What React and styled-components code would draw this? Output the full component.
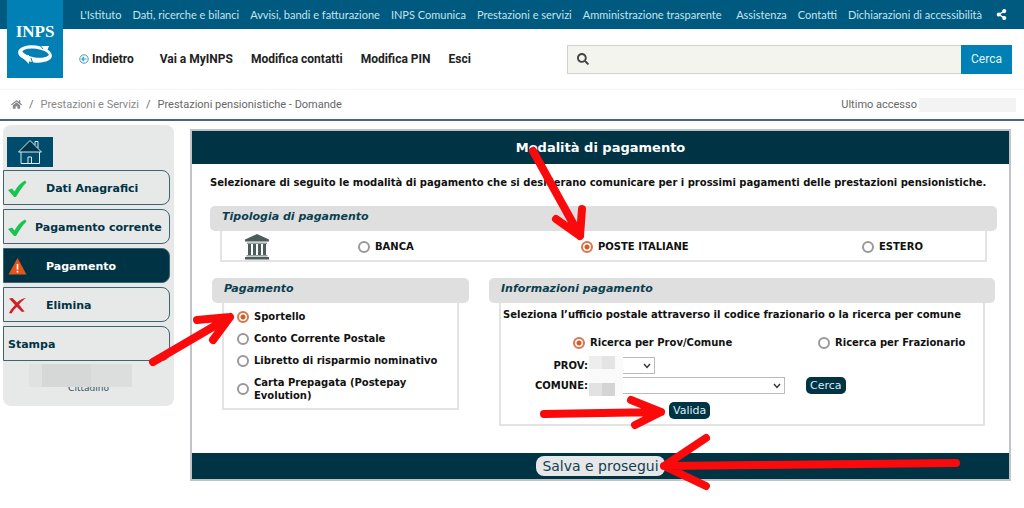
import React, {useState} from 'react'
import styled, {createGlobalStyle, css} from 'styled-components'
import {FaHome, FaSearch, FaShareAlt} from 'react-icons/fa'

const navy = '#003344'
const teal = '#00597f'
const blue = '#0080b4'
const grey = '#dfdfdf'
const red = '#fb0a0c'

const institutionalLinks = [
  "L'Istituto",
  'Dati, ricerche e bilanci',
  'Avvisi, bandi e fatturazione',
  'INPS Comunica',
  'Prestazioni e servizi',
  'Amministrazione trasparente'
]
const serviceLinks = ['Assistenza', 'Contatti', 'Dichiarazioni di accessibilità']
const actions = ['Vai a MyINPS', 'Modifica contatti', 'Modifica PIN', 'Esci']

const steps = [
  {label: 'Dati Anagrafici', icon: 'check'},
  {label: 'Pagamento corrente', icon: 'check', tight: true},
  {label: 'Pagamento', icon: 'warning', active: true},
  {label: 'Elimina', icon: 'cross'},
  {label: 'Stampa'}
]

const paymentTypes = ['BANCA', 'POSTE ITALIANE', 'ESTERO']
const paymentModes = [
  'Sportello',
  'Conto Corrente Postale',
  'Libretto di risparmio nominativo',
  'Carta Prepagata (Postepay Evolution)'
]
const searchModes = ['Ricerca per Prov/Comune', 'Ricerca per Frazionario']

export default function App() {
  return (
    <>
      <GlobalStyle />
      <Header />
      <Breadcrumb />
      <Content>
        <Sidebar />
        <PaymentPanel />
      </Content>
    </>
  )
}

function Header() {
  return (
    <header>
      <TopBar>
        <Logo href="#" aria-label="INPS">
          <LogoMark />
        </Logo>
        <TopLinks>
          {institutionalLinks.map(link => (
            <TopLink key={link} href="#">
              {link}
            </TopLink>
          ))}
        </TopLinks>
        <TopLinks>
          {serviceLinks.map(link => (
            <TopLink key={link} href="#">
              {link}
            </TopLink>
          ))}
          <ShareLink href="#" aria-label="Condividi">
            <FaShareAlt size={11} />
          </ShareLink>
        </TopLinks>
      </TopBar>
      <NavBar>
        <Actions>
          <BackLink href="#">
            <BackIcon />
            Indietro
          </BackLink>
          {actions.map(action => (
            <ActionLink key={action} href="#">
              {action}
            </ActionLink>
          ))}
        </Actions>
        <SearchForm onSubmit={e => e.preventDefault()}>
          <SearchField>
            <FaSearch size={12} />
            <SearchInput type="search" aria-label="Cerca nel sito" />
          </SearchField>
          <SearchButton>Cerca</SearchButton>
        </SearchForm>
      </NavBar>
    </header>
  )
}

function Breadcrumb() {
  return (
    <CrumbBar>
      <Crumbs aria-label="Percorso">
        <CrumbLink href="#" aria-label="Home">
          <FaHome size={11} />
        </CrumbLink>
        <span>/</span>
        <CrumbLink href="#">Prestazioni e Servizi</CrumbLink>
        <span>/</span>
        <span>Prestazioni pensionistiche - Domande</span>
      </Crumbs>
      <LastAccess>
        Ultimo accesso
        <HiddenDate />
      </LastAccess>
    </CrumbBar>
  )
}

function Sidebar() {
  return (
    <Side>
      <HomeLink href="#" aria-label="Home">
        <HouseIcon />
      </HomeLink>
      <Steps>
        {steps.map(({label, icon, active, tight}) => (
          <li key={label}>
            <Step href="#" $active={active}>
              {icon && (
                <StepIcon $tight={tight}>
                  <StatusIcon name={icon} />
                </StepIcon>
              )}
              {label}
            </Step>
          </li>
        ))}
      </Steps>
      <User>
        Cittadino
        <UserCover />
      </User>
    </Side>
  )
}

function PaymentPanel() {
  const [type, setType] = useState('POSTE ITALIANE')
  const [mode, setMode] = useState('Sportello')
  const [search, setSearch] = useState('Ricerca per Prov/Comune')

  return (
    <Panel onSubmit={e => e.preventDefault()}>
      <PanelTitle>Modalità di pagamento</PanelTitle>
      <Intro>
        Selezionare di seguito le modalità di pagamento che si desiderano
        comunicare per i prossimi pagamenti delle prestazioni pensionistiche.
      </Intro>

      <TypeSection>
        <SectionTitle>Tipologia di pagamento</SectionTitle>
        <TypeBox role="radiogroup" aria-label="Tipologia di pagamento">
          <BankIcon />
          {paymentTypes.map(item => (
            <Option key={item}>
              <Radio
                name="type"
                checked={type === item}
                onChange={() => setType(item)}
              />
              {item}
              {item === 'POSTE ITALIANE' && <DownArrow />}
            </Option>
          ))}
        </TypeBox>
      </TypeSection>

      <Columns>
        <section>
          <SectionTitle>Pagamento</SectionTitle>
          <ModeBox role="radiogroup" aria-label="Pagamento">
            {paymentModes.map(item => (
              <Option key={item}>
                <Radio
                  name="mode"
                  checked={mode === item}
                  onChange={() => setMode(item)}
                />
                <span>{item}</span>
                {item === 'Sportello' && <UpArrow />}
              </Option>
            ))}
          </ModeBox>
        </section>

        <section>
          <SectionTitle>Informazioni pagamento</SectionTitle>
          <InfoBox>
            <Hint>
              Seleziona l’ufficio postale attraverso il codice frazionario o la
              ricerca per comune
            </Hint>
            <SearchModes role="radiogroup" aria-label="Tipo di ricerca">
              {searchModes.map(item => (
                <Option key={item}>
                  <Radio
                    name="search"
                    checked={search === item}
                    onChange={() => setSearch(item)}
                  />
                  {item}
                </Option>
              ))}
            </SearchModes>
            <Fields>
              <FieldLabel htmlFor="prov">PROV:</FieldLabel>
              <FieldRow>
                <SelectWrap $width="66px">
                  <Select id="prov" />
                  <Chevron />
                  <FieldCover />
                </SelectWrap>
              </FieldRow>
              <FieldLabel htmlFor="comune">COMUNE:</FieldLabel>
              <FieldRow>
                <SelectWrap $width="196px">
                  <Select id="comune" />
                  <Chevron />
                  <FieldCover $low />
                </SelectWrap>
                <SmallButton type="button">Cerca</SmallButton>
              </FieldRow>
            </Fields>
            <ValidateRow>
              <SmallButton type="button">
                Valida
                <RightArrow />
              </SmallButton>
            </ValidateRow>
          </InfoBox>
        </section>
      </Columns>

      <PanelFooter>
        <SaveButton>
          Salva e prosegui
          <LeftArrow />
        </SaveButton>
      </PanelFooter>
    </Panel>
  )
}

/* Icons */

function LogoMark() {
  return (
    <svg width="40" height="52" viewBox="0 0 40 52" fill="#fff">
      <text
        x="20"
        y="24"
        textAnchor="middle"
        fontFamily="'Liberation Serif', serif"
        fontWeight="700"
        fontSize="17"
      >
        INPS
      </text>
      <g transform="rotate(8 20 41)">
        <path
          fillRule="evenodd"
          d="M3 41A17 8.500 0 0 1 37 41A17 8.500 0 0 1 3 41ZM7 40A14 6 0 0 0 34 40A14 6 0 0 0 7 40Z"
        />
      </g>
      <path d="M25 33L34 33L32 38Z" />
      <path d="M7 44L14 42L14 51Z" />
      <path d="M24 31L28 36M16 45L18 51" stroke={blue} strokeWidth="1" />
    </svg>
  )
}

function BackIcon() {
  return (
    <svg width="10" height="10" viewBox="0 0 10 10" fill="none" stroke="#3a9cc2">
      <circle cx="5" cy="5" r="4.2" />
      <path d="M7.500 5H3M5 3L3 5L5 7" strokeWidth="1.2" />
    </svg>
  )
}

function HouseIcon() {
  return (
    <svg width="26" height="26" viewBox="0 0 26 26" fill="none" stroke="#d9ecf2">
      <path d="M18 6V2.500H21V9" />
      <path d="M4 13V24.500H22.500V13" />
      <path d="M13 1.500L1.500 13H24.500Z" fill="#00374d" />
      <path d="M11 24.500V18H14.500V24.500" />
    </svg>
  )
}

function StatusIcon({name}) {
  if (name === 'check') {
    return (
      <svg width="19" height="18" viewBox="0 0 19 18">
        <path
          d="M0 10L4 8.500L6.500 11.500C9 7 12 3 17 0.500L18.500 2.500C14 6.500 11 12 8 17H6Z"
          fill="#18c552"
        />
      </svg>
    )
  }
  if (name === 'warning') {
    return (
      <svg width="19" height="17" viewBox="0 0 19 17">
        <path d="M9.500 0L18.500 16.500H0.500Z" fill="#e2561c" />
        <path d="M9.500 6V11.500M9.500 12.800V14.500" stroke="#fff" strokeWidth="1.600" />
      </svg>
    )
  }
  return (
    <svg width="19" height="17" viewBox="0 0 19 17">
      <path
        d="M1 1.500L4.500 1L9 5.500C12 3 14 1.500 18 1C14.500 3.500 12.500 5.500 11 7.500L16.500 14.500L14 15L9 10C6.500 12 5 14 3.500 16.500L1 16C2.500 13 4.500 10.500 7 8Z"
        fill="#cf2029"
      />
    </svg>
  )
}

function BankIcon() {
  return (
    <BankSvg width="24" height="26" viewBox="0 0 24 26" fill="#4c5c5b">
      <path d="M12 0L24 5.500V7.500H0V5.500Z" />
      <path d="M2 8.500H22V10H2Z" opacity="0.600" />
      <path d="M3 10H6V21H3ZM8 10H11V21H8ZM13 10H16V21H13ZM18 10H21V21H18Z" />
      <path d="M1.500 21H22.500V22.500H1.500Z" opacity="0.600" />
      <path d="M0 23H24V25.500H0Z" />
    </BankSvg>
  )
}

function Chevron() {
  return (
    <ChevronSvg width="8" height="6" viewBox="0 0 8 6" fill="none" stroke="#333" strokeWidth="1.400">
      <path d="M1 1L4 4.500L7 1" />
    </ChevronSvg>
  )
}

/* Hand drawn arrows, each pinned to the control it points at */

function DownArrow() {
  return (
    <DownArrowSvg width="64" height="100" viewBox="0 0 64 100">
      <path d="M6 6L53 91M29 74L53 91L55 64" />
    </DownArrowSvg>
  )
}

function UpArrow() {
  return (
    <UpArrowSvg width="90" height="62" viewBox="0 0 90 62">
      <path d="M6 54L83 9M50 12L83 9L66 32" />
    </UpArrowSvg>
  )
}

function RightArrow() {
  return (
    <RightArrowSvg width="130" height="38" viewBox="0 0 130 38">
      <path d="M5 20L122 18M92 6L122 18L96 31" />
    </RightArrowSvg>
  )
}

function LeftArrow() {
  return (
    <LeftArrowSvg width="304" height="62" viewBox="0 0 304 62">
      <path d="M298 31L100 33L6 34M48 6L6 34L48 54" />
    </LeftArrowSvg>
  )
}

/* Styles */

const GlobalStyle = createGlobalStyle`
  * {
    box-sizing: border-box;
  }
  body {
    margin: 0;
    background: #fff;
    font-family: 'DejaVu Sans', Verdana, sans-serif;
    font-size: 10px;
  }
  a {
    text-decoration: none;
    color: inherit;
  }
  button,
  input,
  select {
    font: inherit;
    margin: 0;
  }
`

const siteFont = css`
  font-family: Roboto, 'Open Sans', sans-serif;
`

const TopBar = styled.div`
  position: relative;
  display: flex;
  justify-content: space-between;
  align-items: center;
  height: 29px;
  padding: 0 17px 0 80px;
  background: ${teal};
  color: #c4e4ee;
  font-family: Lato, sans-serif;
  font-size: 11px;
`

const Logo = styled.a`
  position: absolute;
  top: 0;
  left: 7px;
  display: flex;
  justify-content: center;
  width: 56px;
  height: 78px;
  padding-top: 13px;
  background: ${blue};
`

const TopLinks = styled.nav`
  display: flex;
  align-items: center;
  gap: 11px;
`

const TopLink = styled.a`
  white-space: nowrap;
`

const ShareLink = styled.a`
  display: flex;
  margin-left: 3px;
  color: #fff;
`

const NavBar = styled.div`
  ${siteFont}
  display: flex;
  justify-content: space-between;
  align-items: center;
  height: 61px;
  padding: 0 12px 0 79px;
  border-bottom: 1px solid #f4f4f4;
`

const Actions = styled.nav`
  display: flex;
  gap: 18px;
  color: #222;
  font-size: 12px;
  font-weight: 700;
  white-space: nowrap;
`

const ActionLink = styled.a``

const BackLink = styled.a`
  display: flex;
  align-items: center;
  gap: 3px;
  margin-right: 8px;
`

const SearchForm = styled.form`
  display: flex;
  flex: 0 0 445px;
  height: 29px;
`

const SearchField = styled.div`
  display: flex;
  flex: 1;
  align-items: center;
  gap: 8px;
  padding-left: 9px;
  border: 1px solid #d2d2cf;
  border-right: 0;
  background: #f4f4ef;
  color: #444;
`

const SearchInput = styled.input`
  flex: 1;
  min-width: 0;
  border: 0;
  outline: 0;
  background: none;
`

const SearchButton = styled.button`
  width: 51px;
  padding: 0;
  border: 0;
  background: ${blue};
  color: #e2f3f9;
  font-size: 12px;
`

const CrumbBar = styled.div`
  ${siteFont}
  display: flex;
  justify-content: space-between;
  align-items: center;
  height: 31px;
  padding: 0 8px 0 11px;
  border-bottom: 2px solid #456582;
  color: #666;
  font-size: 11px;
`

const Crumbs = styled.nav`
  display: flex;
  align-items: center;
  gap: 7px;
`

const CrumbLink = styled.a`
  display: flex;
  color: #888;
`

const LastAccess = styled.div`
  display: flex;
  align-items: center;
  gap: 2px;
`

const HiddenDate = styled.span`
  width: 97px;
  height: 14px;
  background: #f3f3f3;
`

const Content = styled.main`
  display: grid;
  grid-template-columns: 171px 1fr;
  align-items: start;
  gap: 16px;
  padding: 4px 13px 24px 3px;
`

const Side = styled.aside`
  height: 281px;
  padding-top: 12px;
  border-radius: 8px;
  background: #e7e8e8;
  color: ${navy};
`

const HomeLink = styled.a`
  display: flex;
  justify-content: center;
  align-items: center;
  width: 46px;
  height: 30px;
  margin-left: 4px;
  background: #004c6d;
`

const Steps = styled.ul`
  display: grid;
  gap: 4px;
  margin: 3px 4px 0 0;
  padding: 0;
  list-style: none;
`

const Step = styled.a`
  display: flex;
  align-items: center;
  height: 35px;
  padding: 2px 0 0 4px;
  border: 1px solid #3c6571;
  border-radius: 0 8px 8px 0;
  font-size: 11px;
  font-weight: 700;
  white-space: nowrap;
  ${props => props.$active && `background: ${navy}; color: #fff;`}
`

const StepIcon = styled.span`
  display: flex;
  flex: none;
  width: ${props => (props.$tight ? '27px' : '38px')};
`

const User = styled.div`
  position: relative;
  padding-top: 21px;
  color: #31505f;
  font-size: 9px;
  line-height: 12px;
  text-align: center;
`

const UserCover = styled.span`
  position: absolute;
  top: 3px;
  left: 26px;
  width: 103px;
  height: 23px;
  background: linear-gradient(90deg, #e0e1e1 13%, #d6d7d7 13% 60%, #dcdddd 60%);
`

const Panel = styled.form`
  margin-top: 4px;
  border: 2px solid #c0c4c6;
`

const PanelTitle = styled.h1`
  margin: 0;
  padding-top: 1px;
  background: ${navy};
  color: #fff;
  font-size: 13px;
  line-height: 32px;
  text-align: center;
`

const Intro = styled.p`
  margin: 12px 18px 16px;
  color: #111;
  font-weight: 700;
  line-height: 14px;
`

const TypeSection = styled.section`
  margin: 0 12px 16px 18px;
`

const Columns = styled.div`
  display: grid;
  grid-template-columns: 257fr 506fr;
  align-items: start;
  gap: 20px;
  margin: 0 14px 27px 20px;
`

const SectionTitle = styled.h2`
  margin: 0;
  padding: 0 12px 4px;
  border-radius: 5px;
  background: ${grey};
  color: #0b3f50;
  font-size: 11px;
  font-style: italic;
  line-height: 21px;
`

const box = css`
  margin: 0 10px;
  border: 2px solid #e3e3e3;
  border-top: 0;
`

const TypeBox = styled.div`
  ${box}
  display: grid;
  grid-template-columns: 136fr 223fr 281fr 123fr;
  align-items: center;
  height: 31px;
  padding-top: 2px;
`

const BankSvg = styled.svg`
  margin-left: 23px;
`

const ModeBox = styled.div`
  ${box}
  display: grid;
  gap: 9px;
  padding: 7px 13px 6px;
`

const Option = styled.label`
  position: relative;
  display: flex;
  justify-self: start;
  align-items: center;
  gap: 5px;
  color: #111;
  font-weight: 700;
  line-height: 13px;
`

const Radio = styled.input.attrs({type: 'radio'})`
  appearance: none;
  flex: none;
  width: 12px;
  height: 12px;
  border: 2px solid #999;
  border-radius: 50%;
  background: #fff;
  &:checked {
    border-color: #dc7548;
    background: radial-gradient(circle, #d65a28 2px, #fff 3px);
  }
`

const InfoBox = styled.div`
  ${box}
  padding: 5px 0;
`

const Hint = styled.p`
  margin: 0 2px;
  color: #111;
  font-weight: 700;
  line-height: 14px;
`

const SearchModes = styled.div`
  display: grid;
  grid-template-columns: 245fr 165fr;
  margin: 14px 0 8px 72px;
`

const Fields = styled.div`
  display: grid;
  grid-template-columns: 87px 1fr;
  align-items: center;
  gap: 3px 1px;
`

const FieldLabel = styled.label`
  color: #111;
  font-weight: 700;
  text-align: right;
`

const FieldRow = styled.div`
  display: flex;
  align-items: center;
  gap: 21px;
`

const SelectWrap = styled.div`
  position: relative;
  width: ${props => props.$width};
  height: 17px;
`

const Select = styled.select`
  appearance: none;
  display: block;
  width: 100%;
  height: 100%;
  border: 1px solid #bbb;
  border-radius: 0;
  background: #fff;
`

const ChevronSvg = styled.svg`
  position: absolute;
  top: 6px;
  right: 4px;
  pointer-events: none;
`

const FieldCover = styled.span`
  position: absolute;
  top: -1px;
  left: 0;
  width: 34px;
  height: 20px;
  background: #fafafa linear-gradient(90deg, #ededed 50%, #e4e4e4 50%) no-repeat
    0 0 / 26px 13px;
  ${props =>
    props.$low &&
    `
    background-image: linear-gradient(90deg, #e2e2e2 50%, #d4d4d4 50%);
    background-position: 0 100%;
  `}
`

const SmallButton = styled.button`
  position: relative;
  height: 17px;
  padding: 0 4px;
  border: 0;
  border-radius: 5px;
  background: ${navy};
  color: #d5eef5;
  font-size: 11px;
  line-height: 17px;
`

const ValidateRow = styled.div`
  display: flex;
  margin: 8px 0 0 168px;
`

const PanelFooter = styled.div`
  display: flex;
  justify-content: center;
  padding: 3px 0;
  background: ${navy};
`

const SaveButton = styled.button`
  position: relative;
  height: 20px;
  padding: 0 6px;
  border: 0;
  border-radius: 8px;
  background: #e6e7e8;
  color: #123f50;
  font-size: 14px;
  line-height: 20px;
`

const Arrow = styled.svg`
  position: absolute;
  z-index: 1;
  fill: none;
  stroke: ${red};
  stroke-width: 8px;
  stroke-linecap: round;
  stroke-linejoin: round;
  pointer-events: none;
`

const DownArrowSvg = styled(Arrow)`
  bottom: 8px;
  left: -54px;
`

const UpArrowSvg = styled(Arrow)`
  top: -2px;
  right: 100%;
`

const RightArrowSvg = styled(Arrow)`
  top: -8px;
  right: 100%;
`

const LeftArrowSvg = styled(Arrow)`
  top: -24px;
  left: calc(100% - 7px);
`
